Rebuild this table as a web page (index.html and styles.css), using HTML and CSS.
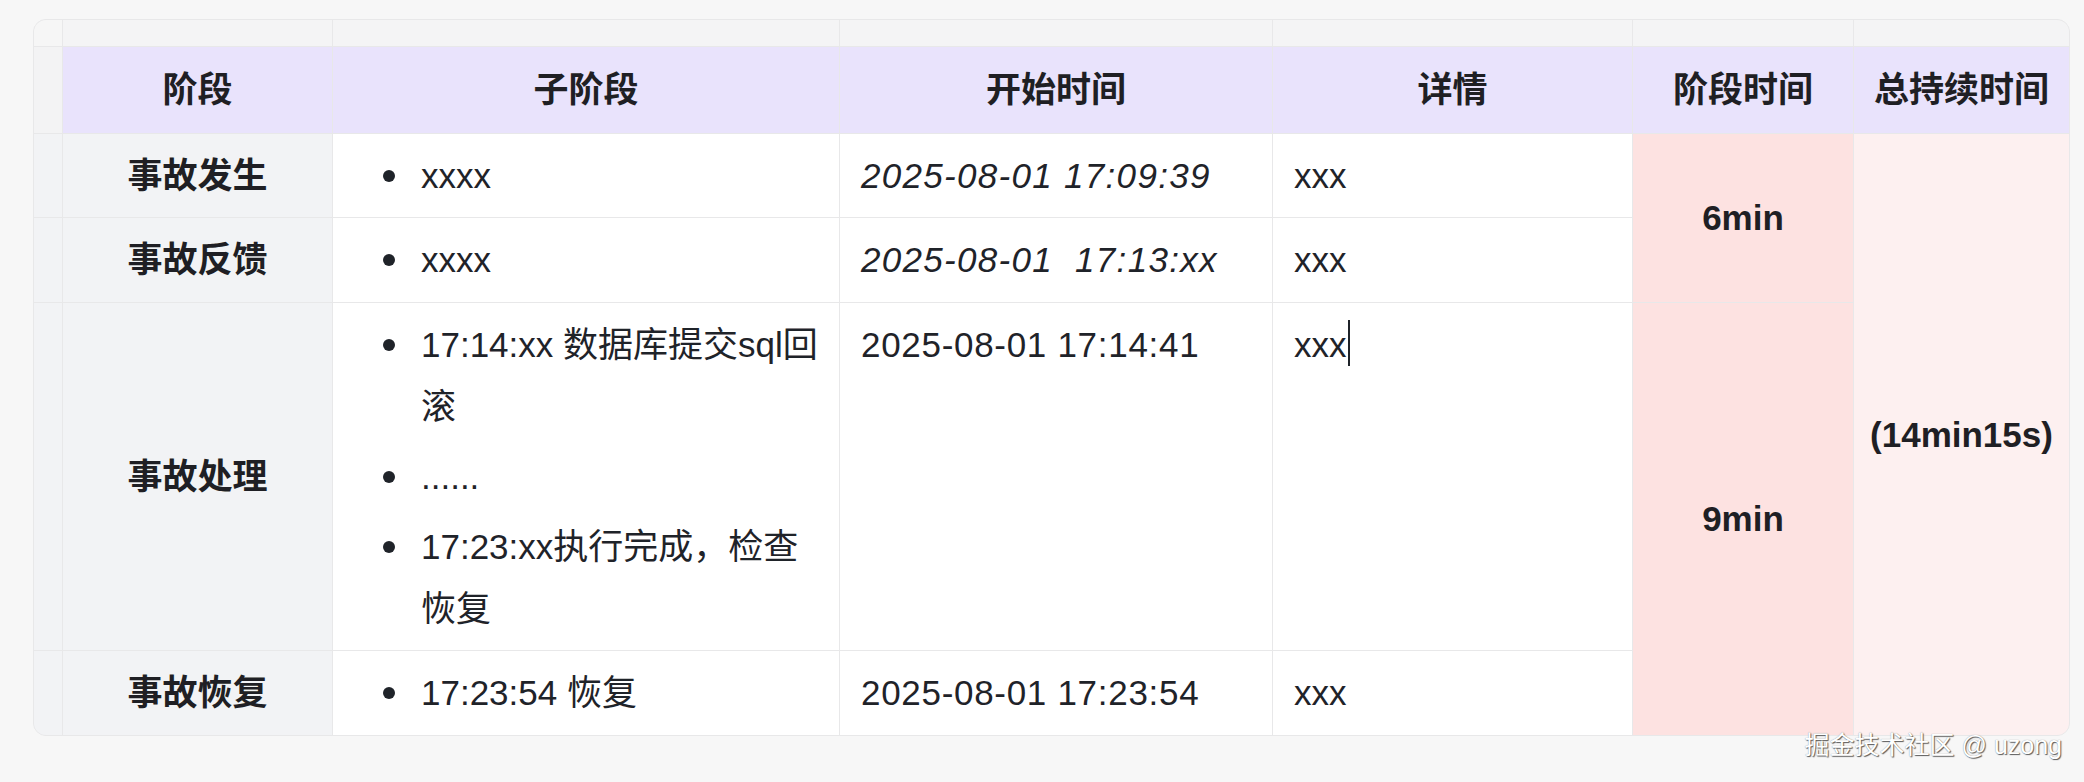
FILE: index.html
```html
<!DOCTYPE html>
<html lang="zh-CN">
<head>
<meta charset="utf-8">
<title>事故时间线</title>
<link rel="stylesheet" href="styles.css">
</head>
<body>
<main class="page">
  <div class="sheet">
    <div class="gut corner"></div>
    <div class="gut top"></div>
    <div class="gut top"></div>
    <div class="gut top"></div>
    <div class="gut top"></div>
    <div class="gut top"></div>
    <div class="gut top"></div>

    <div class="gut side head-side"></div>
    <div class="head">阶段</div>
    <div class="head">子阶段</div>
    <div class="head">开始时间</div>
    <div class="head">详情</div>
    <div class="head">阶段时间</div>
    <div class="head">总持续时间</div>

    <div class="gut side"></div>
    <div class="stage">事故发生</div>
    <div class="cell"><ul class="steps"><li>xxxx</li></ul></div>
    <div class="cell date"><em>2025-08-01 17:09:39</em></div>
    <div class="cell">xxx</div>
    <div class="dur span2">6min</div>
    <div class="total span4">(14min15s)</div>

    <div class="gut side"></div>
    <div class="stage">事故反馈</div>
    <div class="cell"><ul class="steps"><li>xxxx</li></ul></div>
    <div class="cell date"><em>2025-08-01 &nbsp;17:13:xx</em></div>
    <div class="cell">xxx</div>

    <div class="gut side"></div>
    <div class="stage">事故处理</div>
    <div class="cell"><ul class="steps">
        <li>17:14:xx 数据库提交sql回滚</li>
        <li>......</li>
        <li>17:23:xx执行完成，检查恢复</li>
      </ul></div>
    <div class="cell date">2025-08-01 17:14:41</div>
    <div class="cell">xxx<span class="caret"></span></div>
    <div class="dur span2">9min</div>

    <div class="gut side"></div>
    <div class="stage">事故恢复</div>
    <div class="cell"><ul class="steps"><li>17:23:54 恢复</li></ul></div>
    <div class="cell date">2025-08-01 17:23:54</div>
    <div class="cell">xxx</div>
  </div>
  <div class="watermark">掘金技术社区 @ uzong</div>
</main>
</body>
</html>
```

FILE: styles.css
```css
html, body {
  margin: 0;
  padding: 0;
  background: #f7f7f7;
}

.page {
  position: relative;
  width: 2084px;
  height: 782px;
  padding: 19px 0 0 33px;
  box-sizing: border-box;
  font-family: "Liberation Sans", "Noto Sans CJK SC", sans-serif;
  font-size: 35px;
  color: #1f2329;
}

.sheet {
  display: grid;
  grid-template-columns: 28px 269px 506px 432px 359px 220px 215px;
  grid-template-rows: 26px 86px 83px 84px 347px 84px;
  gap: 1px;
  width: max-content;
  background: #e8e8e9;
  border: 1px solid #e8e8e9;
  border-radius: 13px;
  overflow: hidden;
}

.gut {
  background: #f4f4f5;
}

.gut.corner {
  background: #f6f6f6;
}

.gut.side {
  background: #f2f3f5;
}

.gut.head-side {
  background: #f3f3f4;
}

.head {
  display: flex;
  align-items: center;
  justify-content: center;
  background: #e9e3fc;
  font-weight: 700;
  color: #1f1f24;
  line-height: 62px;
}

.stage {
  display: flex;
  align-items: center;
  justify-content: center;
  background: #f2f3f5;
  font-weight: 700;
  color: #1f1f24;
  line-height: 62px;
}

.cell {
  background: #ffffff;
  padding: 11px 21px;
  line-height: 62px;
}

.cell.date {
  letter-spacing: 0.7px;
}

.cell em {
  font-style: italic;
  letter-spacing: 1.3px;
}

.steps {
  list-style: none;
  margin: 0;
  padding: 0;
  display: flex;
  flex-direction: column;
  gap: 8px;
}

.steps li {
  display: flex;
}

.steps li::before {
  content: "";
  flex: none;
  width: 12px;
  height: 12px;
  margin: 25px 26px 0 29px;
  border-radius: 50%;
  background: #1f2329;
}

.caret {
  display: inline-block;
  width: 2px;
  height: 46px;
  margin-left: 1px;
  background: #1f2329;
  vertical-align: -9px;
}

.dur {
  display: flex;
  align-items: center;
  justify-content: center;
  background: #fde2e1;
  font-weight: 700;
  color: #1f1f24;
}

.total {
  display: flex;
  align-items: center;
  justify-content: center;
  background: #fdf0f0;
  font-weight: 700;
  color: #1f1f24;
}

.span2 {
  grid-row: span 2;
}

.span4 {
  grid-row: span 4;
}

.watermark {
  position: absolute;
  right: 22px;
  top: 728px;
  font-size: 25px;
  line-height: 34px;
  color: #ffffff;
  text-shadow: 1px 1px 1px #5a5a5a, 0 0 1px #8a8a8a;
}
```
